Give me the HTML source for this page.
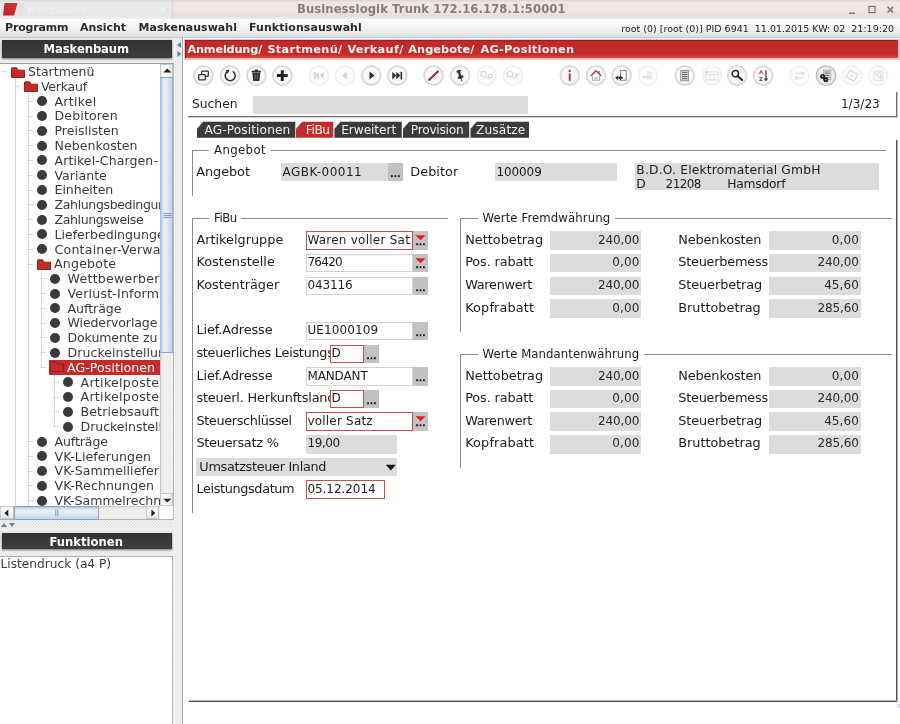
<!DOCTYPE html>
<html lang="de">
<head>
<meta charset="utf-8">
<title>Businesslogik Trunk 172.16.178.1:50001</title>
<style>
*{box-sizing:border-box;margin:0;padding:0}
html,body{width:900px;height:724px;overflow:hidden;background:#fff}
body{position:relative;will-change:transform;font-family:"DejaVu Sans","Liberation Sans",sans-serif;color:#1a1a1a}
.t{position:absolute;white-space:pre;display:block}
.b{position:absolute;overflow:hidden}
svg{position:absolute;overflow:visible}
</style>
</head>
<body>
<div class="b" style="left:0px;top:0px;width:900px;height:19px;background:linear-gradient(#ddd5d5 0,#eee6e6 12%,#efe5e5 55%,#eadcdc 85%,#f1ebeb 100%)"></div>
<div class="b" style="left:0px;top:0px;width:173px;height:19px;background:linear-gradient(#d9d9d9 0,#e9e9e9 12%,#e7e7e7 80%,#efefef 100%);border-right:1px solid #d9d5d5"></div>
<svg style="left:0;top:0" width="180" height="19"><defs><linearGradient id="lg" x1="0" y1="1" x2="1" y2="0"><stop offset="0" stop-color="#b82424"/><stop offset="1" stop-color="#d43a34"/></linearGradient></defs><polygon points="4.6,3 17.6,3 14,15.6 3,15.6" fill="url(#lg)"/><polygon points="19,3 25.4,3 21.6,15.6 15.6,15.6" fill="#eddede"/><path d="M160.5,7.5l5,5M165.5,7.5l-5,5" stroke="#f2f2f2" stroke-width="1.3"/></svg>
<span class="t" style="top:6px;font-size:10.9px;line-height:10.9px;color:#f3f1f1;left:27.50px;">mercaware</span>
<span class="t" style="top:4px;font-size:11.6px;line-height:11.6px;color:#857d7d;left:297.00px;font-weight:bold;letter-spacing:0.09px;">Businesslogik Trunk 172.16.178.1:50001</span>
<svg style="left:840px;top:0" width="60" height="19"><g stroke="#7a7676" fill="none" stroke-width="1.4"><path d="M9,13.2h6"/><rect x="29" y="6.5" width="6" height="6" stroke-width="1.2"/><path d="M47.6,6.8l5.6,5.6M53.2,6.8l-5.6,5.6" stroke-width="1.6"/></g></svg>
<div class="b" style="left:0px;top:19px;width:900px;height:19px;background:linear-gradient(#ffffff 0,#f4f4f4 50%,#dedede 100%);border-bottom:1px solid #c5c9cf"></div>
<span class="t" style="top:23px;font-size:10.95px;line-height:10.95px;color:#2b2b2b;left:5.00px;font-weight:bold;letter-spacing:-0.14px;">Programm</span>
<span class="t" style="top:23px;font-size:10.95px;line-height:10.95px;color:#2b2b2b;left:80.00px;font-weight:bold;letter-spacing:0px;">Ansicht</span>
<span class="t" style="top:23px;font-size:10.95px;line-height:10.95px;color:#2b2b2b;left:138.50px;font-weight:bold;letter-spacing:0.06px;">Maskenauswahl</span>
<span class="t" style="top:23px;font-size:10.95px;line-height:10.95px;color:#2b2b2b;left:249.00px;font-weight:bold;letter-spacing:0.1px;">Funktionsauswahl</span>
<span class="t" style="top:24px;font-size:9.5px;line-height:9.5px;color:#222;right:6.00px;">root (0) [root (0)] PID 6941  11.01.2015 KW: 02  21:19:20</span>
<div class="b" style="left:0px;top:38px;width:176px;height:686px;background:#ececec"></div>
<div class="b" style="left:2px;top:40px;width:170px;height:18px;background:linear-gradient(#333 0,#3d3d3d 100%);box-shadow:0 1px 2px #777"></div>
<span class="t" style="top:44px;font-size:11.6px;line-height:11.6px;color:#fff;left:43.60px;font-weight:bold;letter-spacing:-0.08px;">Maskenbaum</span>
<div class="b" style="left:0px;top:63px;width:174px;height:457px;background:#fff;border-top:1px solid #a0a0a0;border-right:1px solid #b5b5b5;border-bottom:1px solid #b0b0b0"></div>
<div class="b" style="left:0px;top:64px;width:160px;height:442px;background:#fff"><div style="position:absolute;left:0;top:-64px"><div class="b" style="left:1px;top:71px;width:6px;height:1px;background:#d3d9e1"></div><svg style="left:10.50px;top:66.70px" width="15" height="12"><path d="M0.5,1.2 L0.5,10.5 L13.5,10.5 L13.5,3.2 L7.2,3.2 L5.6,0.8 L0.9,0.8 Z" fill="#c62b2b" stroke="#8e1f1f" stroke-width="1"/></svg><span class="t" style="top:66px;font-size:12.55px;line-height:12.55px;color:#3a3a3a;left:28.00px;letter-spacing:-0.002px;">Startmenü</span><div class="b" style="left:14px;top:86px;width:6px;height:1px;background:#d3d9e1"></div><svg style="left:23.50px;top:81.49px" width="15" height="12"><path d="M0.5,1.2 L0.5,10.5 L13.5,10.5 L13.5,3.2 L7.2,3.2 L5.6,0.8 L0.9,0.8 Z" fill="#c62b2b" stroke="#8e1f1f" stroke-width="1"/></svg><span class="t" style="top:81px;font-size:12.55px;line-height:12.55px;color:#3a3a3a;left:41.00px;letter-spacing:-0.24px;">Verkauf</span><div class="b" style="left:27px;top:101px;width:6px;height:1px;background:#d3d9e1"></div><div class="b" style="left:37px;top:96px;width:10px;height:10px;background:#3a3a3a;border-radius:50%"></div><span class="t" style="top:96px;font-size:12.55px;line-height:12.55px;color:#3a3a3a;left:54.50px;letter-spacing:0.273px;">Artikel</span><div class="b" style="left:27px;top:116px;width:6px;height:1px;background:#d3d9e1"></div><div class="b" style="left:37px;top:111px;width:10px;height:10px;background:#3a3a3a;border-radius:50%"></div><span class="t" style="top:110px;font-size:12.55px;line-height:12.55px;color:#3a3a3a;left:54.50px;letter-spacing:0.15px;">Debitoren</span><div class="b" style="left:27px;top:130px;width:6px;height:1px;background:#d3d9e1"></div><div class="b" style="left:37px;top:126px;width:10px;height:10px;background:#3a3a3a;border-radius:50%"></div><span class="t" style="top:125px;font-size:12.55px;line-height:12.55px;color:#3a3a3a;left:54.50px;letter-spacing:0.017px;">Preislisten</span><div class="b" style="left:27px;top:145px;width:6px;height:1px;background:#d3d9e1"></div><div class="b" style="left:37px;top:141px;width:10px;height:10px;background:#3a3a3a;border-radius:50%"></div><span class="t" style="top:140px;font-size:12.55px;line-height:12.55px;color:#3a3a3a;left:54.50px;letter-spacing:0.067px;">Nebenkosten</span><div class="b" style="left:27px;top:160px;width:6px;height:1px;background:#d3d9e1"></div><div class="b" style="left:37px;top:155px;width:10px;height:10px;background:#3a3a3a;border-radius:50%"></div><span class="t" style="top:155px;font-size:12.55px;line-height:12.55px;color:#3a3a3a;left:54.50px;letter-spacing:0.081px;">Artikel-Chargen-</span><div class="b" style="left:27px;top:175px;width:6px;height:1px;background:#d3d9e1"></div><div class="b" style="left:37px;top:170px;width:10px;height:10px;background:#3a3a3a;border-radius:50%"></div><span class="t" style="top:170px;font-size:12.55px;line-height:12.55px;color:#3a3a3a;left:54.50px;letter-spacing:0.013px;">Variante</span><div class="b" style="left:27px;top:190px;width:6px;height:1px;background:#d3d9e1"></div><div class="b" style="left:37px;top:185px;width:10px;height:10px;background:#3a3a3a;border-radius:50%"></div><span class="t" style="top:184px;font-size:12.55px;line-height:12.55px;color:#3a3a3a;left:54.50px;letter-spacing:-0.039px;">Einheiten</span><div class="b" style="left:27px;top:204px;width:6px;height:1px;background:#d3d9e1"></div><div class="b" style="left:37px;top:200px;width:10px;height:10px;background:#3a3a3a;border-radius:50%"></div><span class="t" style="top:199px;font-size:12.55px;line-height:12.55px;color:#3a3a3a;left:54.50px;letter-spacing:-0.37px;">Zahlungsbedingungen</span><div class="b" style="left:27px;top:219px;width:6px;height:1px;background:#d3d9e1"></div><div class="b" style="left:37px;top:215px;width:10px;height:10px;background:#3a3a3a;border-radius:50%"></div><span class="t" style="top:214px;font-size:12.55px;line-height:12.55px;color:#3a3a3a;left:54.50px;letter-spacing:-0.389px;">Zahlungsweise</span><div class="b" style="left:27px;top:234px;width:6px;height:1px;background:#d3d9e1"></div><div class="b" style="left:37px;top:229px;width:10px;height:10px;background:#3a3a3a;border-radius:50%"></div><span class="t" style="top:229px;font-size:12.55px;line-height:12.55px;color:#3a3a3a;left:54.50px;">Lieferbedingungen</span><div class="b" style="left:27px;top:249px;width:6px;height:1px;background:#d3d9e1"></div><div class="b" style="left:37px;top:244px;width:10px;height:10px;background:#3a3a3a;border-radius:50%"></div><span class="t" style="top:244px;font-size:12.55px;line-height:12.55px;color:#3a3a3a;left:54.50px;letter-spacing:0.23px;">Container-Verwaltung</span><div class="b" style="left:27px;top:264px;width:6px;height:1px;background:#d3d9e1"></div><svg style="left:36.50px;top:259.01px" width="15" height="12"><path d="M0.5,1.2 L0.5,10.5 L13.5,10.5 L13.5,3.2 L7.2,3.2 L5.6,0.8 L0.9,0.8 Z" fill="#c62b2b" stroke="#8e1f1f" stroke-width="1"/></svg><span class="t" style="top:258px;font-size:12.55px;line-height:12.55px;color:#3a3a3a;left:54.00px;letter-spacing:0.216px;">Angebote</span><div class="b" style="left:40px;top:278px;width:6px;height:1px;background:#d3d9e1"></div><div class="b" style="left:50px;top:274px;width:10px;height:10px;background:#3a3a3a;border-radius:50%"></div><span class="t" style="top:273px;font-size:12.55px;line-height:12.55px;color:#3a3a3a;left:67.50px;letter-spacing:0.275px;">Wettbewerber</span><div class="b" style="left:40px;top:293px;width:6px;height:1px;background:#d3d9e1"></div><div class="b" style="left:50px;top:289px;width:10px;height:10px;background:#3a3a3a;border-radius:50%"></div><span class="t" style="top:288px;font-size:12.55px;line-height:12.55px;color:#3a3a3a;left:67.50px;letter-spacing:0.204px;">Verlust-Information</span><div class="b" style="left:40px;top:308px;width:6px;height:1px;background:#d3d9e1"></div><div class="b" style="left:50px;top:303px;width:10px;height:10px;background:#3a3a3a;border-radius:50%"></div><span class="t" style="top:303px;font-size:12.55px;line-height:12.55px;color:#3a3a3a;left:67.50px;letter-spacing:-0.031px;">Aufträge</span><div class="b" style="left:40px;top:323px;width:6px;height:1px;background:#d3d9e1"></div><div class="b" style="left:50px;top:318px;width:10px;height:10px;background:#3a3a3a;border-radius:50%"></div><span class="t" style="top:317px;font-size:12.55px;line-height:12.55px;color:#3a3a3a;left:67.50px;letter-spacing:-0.114px;">Wiedervorlage</span><div class="b" style="left:40px;top:337px;width:6px;height:1px;background:#d3d9e1"></div><div class="b" style="left:50px;top:333px;width:10px;height:10px;background:#3a3a3a;border-radius:50%"></div><span class="t" style="top:332px;font-size:12.55px;line-height:12.55px;color:#3a3a3a;left:67.50px;letter-spacing:-0.113px;">Dokumente zu</span><div class="b" style="left:40px;top:352px;width:6px;height:1px;background:#d3d9e1"></div><div class="b" style="left:50px;top:348px;width:10px;height:10px;background:#3a3a3a;border-radius:50%"></div><span class="t" style="top:347px;font-size:12.55px;line-height:12.55px;color:#3a3a3a;left:67.50px;letter-spacing:0.059px;">Druckeinstellungen</span><div class="b" style="left:40px;top:367px;width:6px;height:1px;background:#d3d9e1"></div><div class="b" style="left:49px;top:360px;width:111px;height:15px;background:#c42c2c"></div><svg style="left:49.50px;top:361.36px" width="15" height="12"><path d="M0.5,1.2 L0.5,10.5 L13.5,10.5 L13.5,3.2 L7.2,3.2 L5.6,0.8 L0.9,0.8 Z" fill="#c62b2b" stroke="#8e1f1f" stroke-width="1"/></svg><span class="t" style="top:362px;font-size:12.55px;line-height:12.55px;color:#fff;left:67.00px;letter-spacing:0.075px;">AG-Positionen</span><div class="b" style="left:53px;top:382px;width:6px;height:1px;background:#d3d9e1"></div><div class="b" style="left:63px;top:377px;width:10px;height:10px;background:#3a3a3a;border-radius:50%"></div><span class="t" style="top:377px;font-size:12.55px;line-height:12.55px;color:#3a3a3a;left:80.50px;letter-spacing:0.314px;">Artikelposten</span><div class="b" style="left:53px;top:397px;width:6px;height:1px;background:#d3d9e1"></div><div class="b" style="left:63px;top:392px;width:10px;height:10px;background:#3a3a3a;border-radius:50%"></div><span class="t" style="top:391px;font-size:12.55px;line-height:12.55px;color:#3a3a3a;left:80.50px;letter-spacing:0.314px;">Artikelposten</span><div class="b" style="left:53px;top:411px;width:6px;height:1px;background:#d3d9e1"></div><div class="b" style="left:63px;top:407px;width:10px;height:10px;background:#3a3a3a;border-radius:50%"></div><span class="t" style="top:406px;font-size:12.55px;line-height:12.55px;color:#3a3a3a;left:80.50px;letter-spacing:0.143px;">Betriebsauftrag</span><div class="b" style="left:53px;top:426px;width:6px;height:1px;background:#d3d9e1"></div><div class="b" style="left:63px;top:422px;width:10px;height:10px;background:#3a3a3a;border-radius:50%"></div><span class="t" style="top:421px;font-size:12.55px;line-height:12.55px;color:#3a3a3a;left:80.50px;letter-spacing:-0.028px;">Druckeinstellungen</span><div class="b" style="left:27px;top:441px;width:6px;height:1px;background:#d3d9e1"></div><div class="b" style="left:37px;top:437px;width:10px;height:10px;background:#3a3a3a;border-radius:50%"></div><span class="t" style="top:436px;font-size:12.55px;line-height:12.55px;color:#3a3a3a;left:54.50px;letter-spacing:-0.102px;">Aufträge</span><div class="b" style="left:27px;top:456px;width:6px;height:1px;background:#d3d9e1"></div><div class="b" style="left:37px;top:451px;width:10px;height:10px;background:#3a3a3a;border-radius:50%"></div><span class="t" style="top:451px;font-size:12.55px;line-height:12.55px;color:#3a3a3a;left:54.50px;letter-spacing:0.105px;">VK-Lieferungen</span><div class="b" style="left:27px;top:471px;width:6px;height:1px;background:#d3d9e1"></div><div class="b" style="left:37px;top:466px;width:10px;height:10px;background:#3a3a3a;border-radius:50%"></div><span class="t" style="top:465px;font-size:12.55px;line-height:12.55px;color:#3a3a3a;left:54.50px;letter-spacing:0.078px;">VK-Sammellieferung</span><div class="b" style="left:27px;top:485px;width:6px;height:1px;background:#d3d9e1"></div><div class="b" style="left:37px;top:481px;width:10px;height:10px;background:#3a3a3a;border-radius:50%"></div><span class="t" style="top:480px;font-size:12.55px;line-height:12.55px;color:#3a3a3a;left:54.50px;letter-spacing:0.103px;">VK-Rechnungen</span><div class="b" style="left:27px;top:500px;width:6px;height:1px;background:#d3d9e1"></div><div class="b" style="left:37px;top:496px;width:10px;height:10px;background:#3a3a3a;border-radius:50%"></div><span class="t" style="top:495px;font-size:12.55px;line-height:12.55px;color:#3a3a3a;left:54.50px;">VK-Sammelrechnung</span><div class="b" style="left:15px;top:78px;width:1px;height:428px;background:#d3d9e1"></div><div class="b" style="left:28px;top:93px;width:1px;height:413px;background:#d3d9e1"></div><div class="b" style="left:41px;top:270px;width:1px;height:98px;background:#d3d9e1"></div><div class="b" style="left:54px;top:375px;width:1px;height:52px;background:#d3d9e1"></div></div></div>
<div class="b" style="left:160px;top:64px;width:13px;height:442px;background:linear-gradient(90deg,#e2e2e2,#efefef 30%,#ededed);border-left:1px solid #c9c9c9"></div>
<div class="b" style="left:160px;top:64px;width:13px;height:14px;background:linear-gradient(90deg,#f3f3f3,#fbfbfb 40%,#e6e6e6);border:1px solid #c8c8c8"></div>
<svg style="left:159.5px;top:64px" width="14" height="14"><polygon points="3.3,8.4 11.3,8.4 7.3,4.6" fill="#222"/></svg>
<div class="b" style="left:160px;top:493px;width:13px;height:13px;background:linear-gradient(90deg,#f3f3f3,#fbfbfb 40%,#e6e6e6);border:1px solid #c8c8c8"></div>
<svg style="left:159.5px;top:492.5px" width="14" height="14"><polygon points="3.3,5.8 11.3,5.8 7.3,9.6" fill="#222"/></svg>
<div class="b" style="left:160px;top:77px;width:13px;height:276px;background:linear-gradient(90deg,#b4c8e0 0,#e9f1fa 28%,#dfe9f4 55%,#c1d5e9 100%);border:1px solid #86a3cb;border-left-color:#a9bfdc;border-right-color:#9db5d3"></div>
<svg style="left:159.5px;top:210px" width="14" height="12"><path d="M3.4,3.6h8.4M3.4,5.6h8.4M3.4,7.6h8.4" stroke="#7a93b8" stroke-width="0.9"/></svg>
<div class="b" style="left:0px;top:506px;width:160px;height:13px;background:linear-gradient(#e2e2e2,#efefef 30%,#ededed);border-top:1px solid #c9c9c9"></div>
<div class="b" style="left:0px;top:506px;width:14px;height:13px;background:linear-gradient(#f3f3f3,#fbfbfb 40%,#e6e6e6);border:1px solid #c8c8c8"></div>
<svg style="left:0;top:505.7px" width="14" height="14"><polygon points="8.3,3.6 8.3,10.4 4.4,7" fill="#222"/></svg>
<div class="b" style="left:146px;top:506px;width:13px;height:13px;background:linear-gradient(#f3f3f3,#fbfbfb 40%,#e6e6e6);border:1px solid #c8c8c8"></div>
<svg style="left:146px;top:505.7px" width="14" height="14"><polygon points="5.4,3.6 5.4,10.4 9.3,7" fill="#222"/></svg>
<div class="b" style="left:14px;top:506px;width:85px;height:14px;background:linear-gradient(#b4c8e0 0,#e9f1fa 28%,#dfe9f4 55%,#c1d5e9 100%);border:1px solid #86a3cb"></div>
<svg style="left:51px;top:506px" width="12" height="13"><path d="M4.8,3.2v7M6.9,3.2v7" stroke="#7a93b8" stroke-width="0.9"/></svg>
<div class="b" style="left:0px;top:521px;width:173px;height:8px;background-color:#f4f4f4;background-image:linear-gradient(45deg,#dedede 25%,transparent 25%,transparent 75%,#dedede 75%),linear-gradient(45deg,#dedede 25%,transparent 25%,transparent 75%,#dedede 75%);background-size:3px 3px;background-position:0 0,1.5px 1.5px"></div>
<svg style="left:0;top:520px" width="20" height="9"><polygon points="1,7 7,7 4,3" fill="#6a7fa8"/><polygon points="9,3 15,3 12,7" fill="#6a7fa8"/></svg>
<div class="b" style="left:2px;top:533px;width:170px;height:16px;background:linear-gradient(#333 0,#3d3d3d 100%);box-shadow:0 1px 2px #777"></div>
<span class="t" style="top:537px;font-size:11.6px;line-height:11.6px;color:#fff;left:49.50px;font-weight:bold;">Funktionen</span>
<div class="b" style="left:0px;top:556px;width:173px;height:168px;background:#fff;border-top:1px solid #b0b0b0;border-right:1px solid #b5b5b5"></div>
<span class="t" style="top:558px;font-size:12.2px;line-height:12.2px;color:#3a3a3a;left:0.50px;">Listendruck (a4 P)</span>
<div class="b" style="left:174px;top:38px;width:9px;height:686px;background:#f5f5f5"></div>
<div class="b" style="left:175px;top:38px;width:8px;height:686px;background-color:#f4f4f4;background-image:linear-gradient(45deg,#dedede 25%,transparent 25%,transparent 75%,#dedede 75%),linear-gradient(45deg,#dedede 25%,transparent 25%,transparent 75%,#dedede 75%);background-size:3px 3px;background-position:0 0,1.5px 1.5px;border-right:1px solid #a9a9a9"></div>
<svg style="left:175px;top:40px" width="8" height="20"><polygon points="6,2 6,8 2,5" fill="#6a7fa8"/><polygon points="2.5,11 2.5,17 6.5,14" fill="#6a7fa8"/></svg>
<div class="b" style="left:183px;top:38px;width:717px;height:686px;background:#fff"></div>
<div class="b" style="left:185px;top:40px;width:713px;height:18px;background:linear-gradient(#851818 0,#c22929 8%,#c52a2a 78%,#dc4433 100%);border-left:1px solid #8d1c1c;box-shadow:0 0 0.5px 1.5px #efc0c0"></div>
<span class="t" style="top:44px;font-size:11.3px;line-height:11.3px;color:#fdf6f6;left:187.40px;font-weight:bold;letter-spacing:-0.178px;">Anmeldung/</span>
<span class="t" style="top:44px;font-size:11.3px;line-height:11.3px;color:#fdf6f6;left:267.40px;font-weight:bold;letter-spacing:0.337px;">Startmenü/</span>
<span class="t" style="top:44px;font-size:11.3px;line-height:11.3px;color:#fdf6f6;left:347.40px;font-weight:bold;letter-spacing:0.332px;">Verkauf/</span>
<span class="t" style="top:44px;font-size:11.3px;line-height:11.3px;color:#fdf6f6;left:408.30px;font-weight:bold;letter-spacing:0.068px;">Angebote/</span>
<span class="t" style="top:44px;font-size:11.3px;line-height:11.3px;color:#fdf6f6;left:480.50px;font-weight:bold;letter-spacing:0.285px;">AG-Positionen</span>
<svg style="left:0;top:0" width="900" height="100"><g transform="translate(203.4,75.6)"><circle cx="0" cy="0" r="9.4" fill="#f8f8f8" stroke="#d9d9d9" stroke-width="1.8"/><g fill="#f6f6f6" stroke="#2e2e2e" stroke-width="1.25"><rect x="-1.7" y="-4.5" width="6.6" height="5.2" rx="0.7"/><rect x="-4.7" y="-0.9" width="6.6" height="5.2" rx="0.7"/></g></g><g transform="translate(230.1,75.6)"><circle cx="0" cy="0" r="9.4" fill="#f8f8f8" stroke="#d9d9d9" stroke-width="1.8"/><g fill="none" stroke="#2e2e2e" stroke-width="1.5"><path d="M-2.2,-4.3 A5,5 0 1 0 2.6,-4.2"/></g><polygon points="-4.6,-5.6 -0.6,-5.9 -2.2,-2.2" fill="#2e2e2e"/></g><g transform="translate(256.3,75.6)"><circle cx="0" cy="0" r="9.4" fill="#f8f8f8" stroke="#d9d9d9" stroke-width="1.8"/><g fill="#2e2e2e"><path d="M-4,-2.8h8l-0.9,8.2h-6.2z"/><rect x="-4.7" y="-4.8" width="9.4" height="1.6" rx="0.5"/><rect x="-1.7" y="-6" width="3.4" height="1.4" rx="0.4"/></g><path d="M-1.3,-1.5v5M1.3,-1.5v5" stroke="#9a9a9a" stroke-width="0.6"/></g><g transform="translate(282.3,75.6)"><circle cx="0" cy="0" r="9.4" fill="#f8f8f8" stroke="#d9d9d9" stroke-width="1.8"/><path d="M-5.4,0h10.8M0,-5.4v10.8" stroke="#222" stroke-width="3"/></g><g transform="translate(319,75.6)"><circle cx="0" cy="0" r="9.4" fill="#fdfdfd" stroke="#f0f0f0" stroke-width="1.8"/><g fill="#cfcfcf"><rect x="-5" y="-3.5" width="1.6" height="7"/><polygon points="0,-3.5 0,3.5 -3.6,0"/><polygon points="4.6,-3.5 4.6,3.5 1,0"/></g></g><g transform="translate(344.9,75.6)"><circle cx="0" cy="0" r="9.4" fill="#fdfdfd" stroke="#f0f0f0" stroke-width="1.8"/><polygon points="1.8,-3.6 1.8,3.6 -3,0" fill="#cfcfcf"/></g><g transform="translate(371.3,75.6)"><circle cx="0" cy="0" r="9.4" fill="#f8f8f8" stroke="#d9d9d9" stroke-width="1.8"/><polygon points="-1.8,-4 -1.8,4 3.2,0" fill="#2e2e2e"/></g><g transform="translate(397.3,75.6)"><circle cx="0" cy="0" r="9.4" fill="#f8f8f8" stroke="#d9d9d9" stroke-width="1.8"/><g fill="#2e2e2e"><polygon points="-5,-3.8 -5,3.8 -1,0"/><polygon points="-1,-3.8 -1,3.8 3,0"/><rect x="3.2" y="-3.8" width="1.6" height="7.6"/></g></g><g transform="translate(433.4,75.6)"><circle cx="0" cy="0" r="9.4" fill="#f8f8f8" stroke="#d9d9d9" stroke-width="1.8"/><path d="M-4.2,4.1L4.6,-4.1" stroke="#3a3030" stroke-width="2.1" stroke-linecap="round"/><path d="M-3.3,2.9L4.4,-4.3" stroke="#d2404e" stroke-width="1.3" stroke-linecap="round"/></g><g transform="translate(460.1,75.6)"><circle cx="0" cy="0" r="9.4" fill="#f8f8f8" stroke="#d9d9d9" stroke-width="1.8"/><g transform="rotate(-18)"><ellipse cx="0" cy="-4.6" rx="2.3" ry="1.2" fill="#2e2e2e"/><rect x="-1.1" y="-4.4" width="2.2" height="5.4" fill="#2e2e2e"/><ellipse cx="0" cy="1.6" rx="3.1" ry="1.5" fill="#2e2e2e"/><path d="M0,2.6v3.4" stroke="#2e2e2e" stroke-width="0.9"/></g></g><g transform="translate(486.6,75.6)"><circle cx="0" cy="0" r="9.4" fill="#fdfdfd" stroke="#f0f0f0" stroke-width="1.8"/><g fill="none" stroke="#d8d8d8" stroke-width="1.1"><circle cx="-3" cy="-1.4" r="2.8"/><path d="M-1,0.8l3.4,3"/><circle cx="3.6" cy="0.4" r="1.8" stroke="#e3c7c7"/></g></g><g transform="translate(512.9,75.6)"><circle cx="0" cy="0" r="9.4" fill="#fdfdfd" stroke="#f0f0f0" stroke-width="1.8"/><g fill="none" stroke="#d8d8d8" stroke-width="1.1"><circle cx="-3" cy="-1.4" r="2.8"/><path d="M-1,0.8l3.4,3"/><path d="M2.6,-1.2h2.2l-2.2,2.6h2.2" stroke="#e3c7c7"/></g></g><g transform="translate(569.7,75.6)"><circle cx="0" cy="0" r="9.4" fill="#f8f8f8" stroke="#d9d9d9" stroke-width="1.8"/><g fill="#b5343e"><rect x="-0.95" y="-2.2" width="1.9" height="7.4"/><circle cx="0" cy="-4.7" r="1.25"/></g></g><g transform="translate(596,75.6)"><circle cx="0" cy="0" r="9.4" fill="#f8f8f8" stroke="#d9d9d9" stroke-width="1.8"/><path d="M-5.2,0.3L0,-4.9L5.2,0.3" fill="none" stroke="#b54a4a" stroke-width="1.5"/><path d="M3,-4.6v2.4" stroke="#b54a4a" stroke-width="1.3"/><path d="M-3.5,-0.2v5h7v-5" fill="#fafafa" stroke="#a3adb8" stroke-width="0.9"/><path d="M-1.1,4.8v-2.8h2.2v2.8" fill="#e8eef5" stroke="#a3adb8" stroke-width="0.8"/></g><g transform="translate(621.6,75.6)"><circle cx="0" cy="0" r="9.4" fill="#f8f8f8" stroke="#d9d9d9" stroke-width="1.8"/><rect x="-1.2" y="-5" width="5.8" height="9.6" fill="#fcfcfc" stroke="#858585" stroke-width="1"/><g fill="#222"><polygon points="-6.4,2.2 -3.4,-0.2 -3.4,4.6"/><polygon points="-3.6,2.2 -0.6,-0.2 -0.6,4.6"/><rect x="-1" y="1.3" width="2.2" height="1.8"/></g></g><g transform="translate(647.9,75.6)"><circle cx="0" cy="0" r="9.4" fill="#fdfdfd" stroke="#f0f0f0" stroke-width="1.8"/><g fill="#dcdcdc"><rect x="-1" y="-4.6" width="5.4" height="8.6" fill="#eee"/><rect x="-5" y="0.6" width="6" height="2"/></g></g><g transform="translate(684.7,75.6)"><circle cx="0" cy="0" r="9.4" fill="#f8f8f8" stroke="#d9d9d9" stroke-width="1.8"/><rect x="-3.9" y="-5.2" width="7.8" height="10.4" fill="#dcdcdc" stroke="#8a8a8a" stroke-width="0.9"/><path d="M-2.7,-3.2h5.4M-2.7,-1.1h5.4M-2.7,1h5.4M-2.7,3.1h5.4" stroke="#5c5c5c" stroke-width="1"/></g><g transform="translate(712,75.6)"><circle cx="0" cy="0" r="9.4" fill="#fdfdfd" stroke="#f0f0f0" stroke-width="1.8"/><g fill="none" stroke="#dedede" stroke-width="1"><rect x="-6.2" y="-3.6" width="12.4" height="8"/><path d="M-6.2,-1h12.4M-2,-1v5.4M2.2,-1v5.4"/></g><rect x="-6.2" y="-4.4" width="2" height="1.4" fill="#b9c6d8"/></g><g transform="translate(737.2,75.6)"><circle cx="0" cy="0" r="9.4" fill="#f8f8f8" stroke="#d9d9d9" stroke-width="1.8"/><circle cx="-1.9" cy="-1.9" r="3.2" fill="#fbfbfb" stroke="#262626" stroke-width="1.5"/><path d="M0.7,0.7L4.9,4.4" stroke="#262626" stroke-width="2" stroke-linecap="round"/></g><g transform="translate(763.2,75.6)"><circle cx="0" cy="0" r="9.4" fill="#f8f8f8" stroke="#d9d9d9" stroke-width="1.8"/><text x="-4.2" y="-1.2" font-size="5.2" font-weight="bold" fill="#b04a58" font-family="DejaVu Sans,sans-serif">A</text><text x="-4.2" y="5.4" font-size="5.2" font-weight="bold" fill="#444" font-family="DejaVu Sans,sans-serif">Z</text><path d="M2.8,-5.4v9" stroke="#333" stroke-width="1.2"/><polygon points="0.8,3 4.8,3 2.8,5.8" fill="#333"/></g><g transform="translate(799.7,75.6)"><circle cx="0" cy="0" r="9.4" fill="#fdfdfd" stroke="#f0f0f0" stroke-width="1.8"/><g fill="none" stroke="#dcdcdc" stroke-width="1.2"><path d="M-4.4,-2.2h8.6M-4.4,2.2h8.6"/><path d="M2.4,-3.8l2,1.6l-2,1.6M-2.6,0.6l-2,1.6l2,1.6"/></g></g><g transform="translate(826,75.6)"><circle cx="0" cy="0" r="9.8" fill="#f1f1f1" stroke="#b2b2b2" stroke-width="1.1"/><circle cx="0" cy="0" r="8.5" fill="none" stroke="#dfdfdf" stroke-width="1.3"/><rect x="-2.6" y="-5.4" width="7.4" height="9.6" fill="#e4e4e4" stroke="#999" stroke-width="0.7"/><path d="M-1.4,-3.6h5M-1.4,-1.8h5M-1.4,0h5M-1.4,1.8h5" stroke="#666" stroke-width="0.9"/><circle cx="-3.4" cy="0.8" r="2.5" fill="#222"/><circle cx="-0.2" cy="4.2" r="2.5" fill="#222"/><circle cx="-3.4" cy="0.8" r="0.8" fill="#aaa"/><circle cx="-0.2" cy="4.2" r="0.8" fill="#aaa"/></g><g transform="translate(852,75.6)"><circle cx="0" cy="0" r="9.4" fill="#fdfdfd" stroke="#f0f0f0" stroke-width="1.8"/><g transform="rotate(28)"><rect x="-4.6" y="-4" width="9.2" height="8" fill="#fafafa" stroke="#d4d4d4" stroke-width="1.1"/></g><path d="M0,-1.6v3.4" stroke="#d0d0d0" stroke-width="1"/></g><g transform="translate(878.2,75.6)"><circle cx="0" cy="0" r="9.4" fill="#fdfdfd" stroke="#f0f0f0" stroke-width="1.8"/><rect x="-4.2" y="-4.6" width="8.8" height="9.4" fill="#f6f6f6" stroke="#e0e0e0" stroke-width="1"/><path d="M-2.4,-3l3.6,5.4M-0.4,-3.4h3.4M2.4,-1v4.6" stroke="#d6d6d6" stroke-width="1.1"/></g></svg>
<span class="t" style="top:98px;font-size:12.3px;line-height:12.3px;color:#1c1c1c;left:192.00px;">Suchen</span>
<div class="b" style="left:253px;top:96px;width:275px;height:18px;background:#dcdcdc"></div>
<span class="t" style="top:98px;font-size:12.1px;line-height:12.1px;color:#1c1c1c;right:20.20px;">1/3/23</span>
<div class="b" style="left:896px;top:92px;width:2px;height:26px;background:linear-gradient(90deg,#6e6e6e 50%,#c4c4c4 50%)"></div>
<div class="b" style="left:188px;top:116px;width:709px;height:2px;background:linear-gradient(#747474 50%,#cacaca 50%)"></div>
<svg style="left:0;top:0" width="900" height="160"><polygon points="197,137.8 197,128.8 203.2,121.8 295.3,121.8 295.3,137.8" fill="#3b3b3b"/><polygon points="296,137.8 296,128.8 302.2,121.8 333.3,121.8 333.3,137.8" fill="#c62b2b"/><polygon points="334.4,137.8 334.4,128.8 340.59999999999997,121.8 401.8,121.8 401.8,137.8" fill="#3b3b3b"/><polygon points="403,137.8 403,128.8 409.2,121.8 469.2,121.8 469.2,137.8" fill="#3b3b3b"/><polygon points="470.5,137.8 470.5,128.8 476.7,121.8 529,121.8 529,137.8" fill="#3b3b3b"/></svg>
<span class="t" style="top:124px;font-size:12.2px;line-height:12.2px;color:#f1f1f1;left:204.50px;letter-spacing:0.094px;">AG-Positionen</span>
<span class="t" style="top:124px;font-size:12.2px;line-height:12.2px;color:#f1f1f1;left:305.70px;letter-spacing:-0.4px;">FiBu</span>
<span class="t" style="top:124px;font-size:12.2px;line-height:12.2px;color:#f1f1f1;left:341.20px;letter-spacing:-0.079px;">Erweitert</span>
<span class="t" style="top:124px;font-size:12.2px;line-height:12.2px;color:#f1f1f1;left:410.80px;letter-spacing:-0.25px;">Provision</span>
<span class="t" style="top:124px;font-size:12.2px;line-height:12.2px;color:#f1f1f1;left:476.00px;letter-spacing:0.124px;">Zusätze</span>
<div class="b" style="left:896px;top:140px;width:2px;height:562px;background:linear-gradient(90deg,#4c4c4c 50%,#b4b4b4 50%)"></div>
<div class="b" style="left:189px;top:700px;width:708px;height:2px;background:linear-gradient(#b4b4b4 50%,#4c4c4c 50%)"></div>
<div class="b" style="left:897px;top:704px;width:3px;height:4px;background:#dde5ee"></div>
<div class="b" style="left:192px;top:150px;width:1px;height:46px;background:#8c8c8c"></div><div class="b" style="left:192px;top:150px;width:17px;height:1px;background:#8c8c8c"></div><div class="b" style="left:271px;top:150px;width:615px;height:1px;background:#8c8c8c"></div><span class="t" style="top:145px;font-size:11.7px;line-height:11.7px;color:#1c1c1c;left:214.00px;letter-spacing:0.391px;">Angebot</span>
<div class="b" style="left:192px;top:218px;width:1px;height:295px;background:#8c8c8c"></div><div class="b" style="left:192px;top:218px;width:17px;height:1px;background:#8c8c8c"></div><div class="b" style="left:241px;top:218px;width:207px;height:1px;background:#8c8c8c"></div><span class="t" style="top:213px;font-size:11.7px;line-height:11.7px;color:#1c1c1c;left:214.00px;letter-spacing:-0.45px;">FiBu</span>
<div class="b" style="left:460px;top:218px;width:1px;height:114px;background:#8c8c8c"></div><div class="b" style="left:460px;top:218px;width:18px;height:1px;background:#8c8c8c"></div><div class="b" style="left:615px;top:218px;width:277px;height:1px;background:#8c8c8c"></div><span class="t" style="top:213px;font-size:11.7px;line-height:11.7px;color:#1c1c1c;left:482.50px;letter-spacing:0.098px;">Werte Fremdwährung</span>
<div class="b" style="left:460px;top:354px;width:1px;height:114px;background:#8c8c8c"></div><div class="b" style="left:460px;top:354px;width:18px;height:1px;background:#8c8c8c"></div><div class="b" style="left:644px;top:354px;width:248px;height:1px;background:#8c8c8c"></div><span class="t" style="top:349px;font-size:11.7px;line-height:11.7px;color:#1c1c1c;left:482.50px;letter-spacing:0.062px;">Werte Mandantenwährung</span>
<span class="t" style="top:166px;font-size:12.85px;line-height:12.85px;color:#1c1c1c;left:196.30px;letter-spacing:-0.066px;">Angebot</span>
<div class="b" style="left:281px;top:163px;width:107px;height:18px;background:#dcdcdc"></div>
<span class="t" style="top:166px;font-size:12.0px;line-height:12.0px;color:#1c1c1c;left:282.50px;letter-spacing:0.507px;">AGBK-00011</span>
<div class="b" style="left:388px;top:163px;width:15px;height:18px;background:#c2c2c2"><svg style="left:0;top:0" width="14.7" height="18.4"><rect x="3.05" y="12.20" width="1.8" height="1.9" fill="#111"/><rect x="6.45" y="12.20" width="1.8" height="1.9" fill="#111"/><rect x="9.85" y="12.20" width="1.8" height="1.9" fill="#111"/></svg></div>
<span class="t" style="top:166px;font-size:12.85px;line-height:12.85px;color:#1c1c1c;left:410.30px;letter-spacing:0.033px;">Debitor</span>
<div class="b" style="left:495px;top:163px;width:122px;height:18px;background:#dcdcdc"></div>
<span class="t" style="top:166px;font-size:12.0px;line-height:12.0px;color:#1c1c1c;left:496.60px;letter-spacing:-0.128px;">100009</span>
<div class="b" style="left:635px;top:163px;width:244px;height:27px;background:#dcdcdc"></div>
<span class="t" style="top:164px;font-size:12.3px;line-height:12.3px;color:#1c1c1c;left:636.30px;letter-spacing:0.178px;">B.D.O. Elektromaterial GmbH</span>
<span class="t" style="top:178px;font-size:12.3px;line-height:12.3px;color:#1c1c1c;left:636.30px;">D</span>
<span class="t" style="top:178px;font-size:12.0px;line-height:12.0px;color:#1c1c1c;left:665.60px;letter-spacing:-0.565px;">21208</span>
<span class="t" style="top:178px;font-size:12.3px;line-height:12.3px;color:#1c1c1c;left:727.30px;letter-spacing:-0.239px;">Hamsdorf</span>
<span class="t" style="top:234px;font-size:12.85px;line-height:12.85px;color:#1c1c1c;left:196.40px;letter-spacing:0.0px;">Artikelgruppe</span>
<span class="t" style="top:256px;font-size:12.85px;line-height:12.85px;color:#1c1c1c;left:196.40px;letter-spacing:0.034px;">Kostenstelle</span>
<span class="t" style="top:279px;font-size:12.85px;line-height:12.85px;color:#1c1c1c;left:196.40px;letter-spacing:-0.013px;">Kostenträger</span>
<span class="t" style="top:324px;font-size:12.85px;line-height:12.85px;color:#1c1c1c;left:196.40px;letter-spacing:-0.093px;">Lief.Adresse</span>
<span class="t" style="top:347px;font-size:12.85px;line-height:12.85px;color:#1c1c1c;left:196.40px;letter-spacing:-0.27px;max-width:133.5px;overflow:hidden;">steuerliches Leistungsland</span>
<span class="t" style="top:370px;font-size:12.85px;line-height:12.85px;color:#1c1c1c;left:196.40px;letter-spacing:-0.093px;">Lief.Adresse</span>
<span class="t" style="top:392px;font-size:12.85px;line-height:12.85px;color:#1c1c1c;left:196.40px;letter-spacing:-0.167px;max-width:133.5px;overflow:hidden;">steuerl. Herkunftsland</span>
<span class="t" style="top:415px;font-size:12.85px;line-height:12.85px;color:#1c1c1c;left:196.40px;letter-spacing:-0.362px;">Steuerschlüssel</span>
<span class="t" style="top:437px;font-size:12.85px;line-height:12.85px;color:#1c1c1c;left:196.40px;letter-spacing:-0.233px;">Steuersatz %</span>
<span class="t" style="top:483px;font-size:12.85px;line-height:12.85px;color:#1c1c1c;left:196.40px;letter-spacing:-0.366px;">Leistungsdatum</span>
<div class="b" style="left:306px;top:231px;width:107px;height:19px;background:#fff;border:1px solid #c4504c"></div><span class="t" style="top:234px;font-size:12.0px;line-height:12.0px;color:#1c1c1c;left:307.40px;letter-spacing:0.241px;max-width:103.7px;overflow:hidden;">Waren voller Satz</span>
<div class="b" style="left:413px;top:231px;width:15px;height:19px;background:#c2c2c2"><svg style="left:0;top:0" width="15.0" height="18.5"><rect x="3.20" y="12.30" width="1.8" height="1.9" fill="#111"/><rect x="6.60" y="12.30" width="1.8" height="1.9" fill="#111"/><rect x="10.00" y="12.30" width="1.8" height="1.9" fill="#111"/><polygon points="2.50,4.2 12.50,4.2 7.50,9.2" fill="#dd1f26"/></svg></div>
<div class="b" style="left:306px;top:254px;width:107px;height:18px;background:#fff;border:1px solid #d2d2d2"></div><span class="t" style="top:256px;font-size:12.0px;line-height:12.0px;color:#1c1c1c;left:307.40px;letter-spacing:-0.715px;max-width:103.7px;overflow:hidden;">76420</span>
<div class="b" style="left:413px;top:254px;width:15px;height:18px;background:#c2c2c2"><svg style="left:0;top:0" width="15.0" height="18.5"><rect x="3.20" y="12.30" width="1.8" height="1.9" fill="#111"/><rect x="6.60" y="12.30" width="1.8" height="1.9" fill="#111"/><rect x="10.00" y="12.30" width="1.8" height="1.9" fill="#111"/><polygon points="2.50,4.2 12.50,4.2 7.50,9.2" fill="#dd1f26"/></svg></div>
<div class="b" style="left:306px;top:277px;width:107px;height:18px;background:#fff;border:1px solid #d2d2d2"></div><span class="t" style="top:279px;font-size:12.0px;line-height:12.0px;color:#1c1c1c;left:307.40px;letter-spacing:-0.108px;max-width:103.7px;overflow:hidden;">043116</span>
<div class="b" style="left:413px;top:277px;width:15px;height:18px;background:#c2c2c2"><svg style="left:0;top:0" width="15.0" height="18.5"><rect x="3.20" y="12.30" width="1.8" height="1.9" fill="#111"/><rect x="6.60" y="12.30" width="1.8" height="1.9" fill="#111"/><rect x="10.00" y="12.30" width="1.8" height="1.9" fill="#111"/></svg></div>
<div class="b" style="left:306px;top:322px;width:107px;height:18px;background:#fff;border:1px solid #d2d2d2"></div><span class="t" style="top:324px;font-size:12.0px;line-height:12.0px;color:#1c1c1c;left:307.40px;letter-spacing:0.12px;max-width:103.7px;overflow:hidden;">UE1000109</span>
<div class="b" style="left:413px;top:322px;width:15px;height:18px;background:#c2c2c2"><svg style="left:0;top:0" width="15.0" height="18.5"><rect x="3.20" y="12.30" width="1.8" height="1.9" fill="#111"/><rect x="6.60" y="12.30" width="1.8" height="1.9" fill="#111"/><rect x="10.00" y="12.30" width="1.8" height="1.9" fill="#111"/></svg></div>
<div class="b" style="left:330px;top:345px;width:34px;height:18px;background:#fff;border:1px solid #c4504c"></div><span class="t" style="top:347px;font-size:12.0px;line-height:12.0px;color:#1c1c1c;left:331.40px;letter-spacing:0.1px;max-width:30.8px;overflow:hidden;">D</span>
<div class="b" style="left:364px;top:345px;width:15px;height:18px;background:#c2c2c2"><svg style="left:0;top:0" width="14.9" height="18.5"><rect x="3.15" y="12.30" width="1.8" height="1.9" fill="#111"/><rect x="6.55" y="12.30" width="1.8" height="1.9" fill="#111"/><rect x="9.95" y="12.30" width="1.8" height="1.9" fill="#111"/></svg></div>
<div class="b" style="left:306px;top:367px;width:107px;height:19px;background:#fff;border:1px solid #d2d2d2"></div><span class="t" style="top:370px;font-size:12.0px;line-height:12.0px;color:#1c1c1c;left:307.40px;letter-spacing:-0.117px;max-width:103.7px;overflow:hidden;">MANDANT</span>
<div class="b" style="left:413px;top:367px;width:15px;height:19px;background:#c2c2c2"><svg style="left:0;top:0" width="15.0" height="18.5"><rect x="3.20" y="12.30" width="1.8" height="1.9" fill="#111"/><rect x="6.60" y="12.30" width="1.8" height="1.9" fill="#111"/><rect x="10.00" y="12.30" width="1.8" height="1.9" fill="#111"/></svg></div>
<div class="b" style="left:330px;top:390px;width:34px;height:18px;background:#fff;border:1px solid #c4504c"></div><span class="t" style="top:392px;font-size:12.0px;line-height:12.0px;color:#1c1c1c;left:331.40px;letter-spacing:0.1px;max-width:30.8px;overflow:hidden;">D</span>
<div class="b" style="left:364px;top:390px;width:15px;height:18px;background:#c2c2c2"><svg style="left:0;top:0" width="14.9" height="18.5"><rect x="3.15" y="12.30" width="1.8" height="1.9" fill="#111"/><rect x="6.55" y="12.30" width="1.8" height="1.9" fill="#111"/><rect x="9.95" y="12.30" width="1.8" height="1.9" fill="#111"/></svg></div>
<div class="b" style="left:306px;top:412px;width:107px;height:19px;background:#fff;border:1px solid #c4504c"></div><span class="t" style="top:415px;font-size:12.0px;line-height:12.0px;color:#1c1c1c;left:307.40px;letter-spacing:0.206px;max-width:103.7px;overflow:hidden;">voller Satz</span>
<div class="b" style="left:413px;top:412px;width:15px;height:19px;background:#c2c2c2"><svg style="left:0;top:0" width="15.0" height="18.5"><rect x="3.20" y="12.30" width="1.8" height="1.9" fill="#111"/><rect x="6.60" y="12.30" width="1.8" height="1.9" fill="#111"/><rect x="10.00" y="12.30" width="1.8" height="1.9" fill="#111"/><polygon points="2.50,4.2 12.50,4.2 7.50,9.2" fill="#dd1f26"/></svg></div>
<div class="b" style="left:306px;top:435px;width:91px;height:19px;background:#dcdcdc"></div><span class="t" style="top:437px;font-size:12.0px;line-height:12.0px;color:#1c1c1c;left:307.40px;letter-spacing:-0.38px;max-width:88.0px;overflow:hidden;">19,00</span>
<div class="b" style="left:196px;top:458px;width:201px;height:18px;background:#dcdcdc"></div>
<span class="t" style="top:461px;font-size:12.85px;line-height:12.85px;color:#1c1c1c;left:199.30px;letter-spacing:-0.322px;">Umsatzsteuer Inland</span>
<svg style="left:380px;top:457.70px" width="20" height="19"><polygon points="5.8,6.8 15.8,6.8 10.8,12.4" fill="#111"/></svg>
<div class="b" style="left:306px;top:480px;width:79px;height:19px;background:#fff;border:1px solid #c4504c"></div><span class="t" style="top:483px;font-size:12.0px;line-height:12.0px;color:#1c1c1c;left:307.40px;letter-spacing:-0.051px;max-width:76.2px;overflow:hidden;">05.12.2014</span>
<span class="t" style="top:234px;font-size:12.85px;line-height:12.85px;color:#1c1c1c;left:465.20px;letter-spacing:0.013px;">Nettobetrag</span>
<div class="b" style="left:550px;top:231px;width:91px;height:19px;background:#dcdcdc"></div>
<span class="t" style="top:234px;font-size:12.0px;line-height:12.0px;color:#2a2a2a;right:260.86px;letter-spacing:-0.16px;">240,00</span>
<span class="t" style="top:234px;font-size:12.85px;line-height:12.85px;color:#1c1c1c;left:678.20px;letter-spacing:-0.1px;max-width:90.8px;overflow:hidden;">Nebenkosten</span>
<div class="b" style="left:769px;top:231px;width:92px;height:19px;background:#dcdcdc"></div>
<span class="t" style="top:234px;font-size:12.0px;line-height:12.0px;color:#2a2a2a;right:41.12px;letter-spacing:0.08px;">0,00</span>
<span class="t" style="top:256px;font-size:12.85px;line-height:12.85px;color:#1c1c1c;left:465.20px;letter-spacing:-0.126px;">Pos. rabatt</span>
<div class="b" style="left:550px;top:254px;width:91px;height:18px;background:#dcdcdc"></div>
<span class="t" style="top:256px;font-size:12.0px;line-height:12.0px;color:#2a2a2a;right:260.62px;letter-spacing:0.08px;">0,00</span>
<span class="t" style="top:256px;font-size:12.85px;line-height:12.85px;color:#1c1c1c;left:678.20px;letter-spacing:-0.206px;max-width:90.8px;overflow:hidden;">Steuerbemessung</span>
<div class="b" style="left:769px;top:254px;width:92px;height:18px;background:#dcdcdc"></div>
<span class="t" style="top:256px;font-size:12.0px;line-height:12.0px;color:#2a2a2a;right:41.36px;letter-spacing:-0.16px;">240,00</span>
<span class="t" style="top:279px;font-size:12.85px;line-height:12.85px;color:#1c1c1c;left:465.20px;letter-spacing:-0.29px;">Warenwert</span>
<div class="b" style="left:550px;top:277px;width:91px;height:18px;background:#dcdcdc"></div>
<span class="t" style="top:279px;font-size:12.0px;line-height:12.0px;color:#2a2a2a;right:260.86px;letter-spacing:-0.16px;">240,00</span>
<span class="t" style="top:279px;font-size:12.85px;line-height:12.85px;color:#1c1c1c;left:678.20px;letter-spacing:-0.074px;max-width:90.8px;overflow:hidden;">Steuerbetrag</span>
<div class="b" style="left:769px;top:277px;width:92px;height:18px;background:#dcdcdc"></div>
<span class="t" style="top:279px;font-size:12.0px;line-height:12.0px;color:#2a2a2a;right:41.13px;letter-spacing:0.07px;">45,60</span>
<span class="t" style="top:302px;font-size:12.85px;line-height:12.85px;color:#1c1c1c;left:465.20px;letter-spacing:0.145px;">Kopfrabatt</span>
<div class="b" style="left:550px;top:299px;width:91px;height:19px;background:#dcdcdc"></div>
<span class="t" style="top:302px;font-size:12.0px;line-height:12.0px;color:#2a2a2a;right:260.62px;letter-spacing:0.08px;">0,00</span>
<span class="t" style="top:302px;font-size:12.85px;line-height:12.85px;color:#1c1c1c;left:678.20px;letter-spacing:-0.002px;max-width:90.8px;overflow:hidden;">Bruttobetrag</span>
<div class="b" style="left:769px;top:299px;width:92px;height:19px;background:#dcdcdc"></div>
<span class="t" style="top:302px;font-size:12.0px;line-height:12.0px;color:#2a2a2a;right:41.36px;letter-spacing:-0.16px;">285,60</span>
<span class="t" style="top:370px;font-size:12.85px;line-height:12.85px;color:#1c1c1c;left:465.20px;letter-spacing:0.013px;">Nettobetrag</span>
<div class="b" style="left:550px;top:367px;width:91px;height:19px;background:#dcdcdc"></div>
<span class="t" style="top:370px;font-size:12.0px;line-height:12.0px;color:#2a2a2a;right:260.86px;letter-spacing:-0.16px;">240,00</span>
<span class="t" style="top:370px;font-size:12.85px;line-height:12.85px;color:#1c1c1c;left:678.20px;letter-spacing:-0.1px;max-width:90.8px;overflow:hidden;">Nebenkosten</span>
<div class="b" style="left:769px;top:367px;width:92px;height:19px;background:#dcdcdc"></div>
<span class="t" style="top:370px;font-size:12.0px;line-height:12.0px;color:#2a2a2a;right:41.12px;letter-spacing:0.08px;">0,00</span>
<span class="t" style="top:392px;font-size:12.85px;line-height:12.85px;color:#1c1c1c;left:465.20px;letter-spacing:-0.126px;">Pos. rabatt</span>
<div class="b" style="left:550px;top:390px;width:91px;height:18px;background:#dcdcdc"></div>
<span class="t" style="top:392px;font-size:12.0px;line-height:12.0px;color:#2a2a2a;right:260.62px;letter-spacing:0.08px;">0,00</span>
<span class="t" style="top:392px;font-size:12.85px;line-height:12.85px;color:#1c1c1c;left:678.20px;letter-spacing:-0.206px;max-width:90.8px;overflow:hidden;">Steuerbemessung</span>
<div class="b" style="left:769px;top:390px;width:92px;height:18px;background:#dcdcdc"></div>
<span class="t" style="top:392px;font-size:12.0px;line-height:12.0px;color:#2a2a2a;right:41.36px;letter-spacing:-0.16px;">240,00</span>
<span class="t" style="top:415px;font-size:12.85px;line-height:12.85px;color:#1c1c1c;left:465.20px;letter-spacing:-0.29px;">Warenwert</span>
<div class="b" style="left:550px;top:412px;width:91px;height:19px;background:#dcdcdc"></div>
<span class="t" style="top:415px;font-size:12.0px;line-height:12.0px;color:#2a2a2a;right:260.86px;letter-spacing:-0.16px;">240,00</span>
<span class="t" style="top:415px;font-size:12.85px;line-height:12.85px;color:#1c1c1c;left:678.20px;letter-spacing:-0.074px;max-width:90.8px;overflow:hidden;">Steuerbetrag</span>
<div class="b" style="left:769px;top:412px;width:92px;height:19px;background:#dcdcdc"></div>
<span class="t" style="top:415px;font-size:12.0px;line-height:12.0px;color:#2a2a2a;right:41.13px;letter-spacing:0.07px;">45,60</span>
<span class="t" style="top:437px;font-size:12.85px;line-height:12.85px;color:#1c1c1c;left:465.20px;letter-spacing:0.145px;">Kopfrabatt</span>
<div class="b" style="left:550px;top:435px;width:91px;height:19px;background:#dcdcdc"></div>
<span class="t" style="top:437px;font-size:12.0px;line-height:12.0px;color:#2a2a2a;right:260.62px;letter-spacing:0.08px;">0,00</span>
<span class="t" style="top:437px;font-size:12.85px;line-height:12.85px;color:#1c1c1c;left:678.20px;letter-spacing:-0.002px;max-width:90.8px;overflow:hidden;">Bruttobetrag</span>
<div class="b" style="left:769px;top:435px;width:92px;height:19px;background:#dcdcdc"></div>
<span class="t" style="top:437px;font-size:12.0px;line-height:12.0px;color:#2a2a2a;right:41.36px;letter-spacing:-0.16px;">285,60</span>
</body>
</html>
